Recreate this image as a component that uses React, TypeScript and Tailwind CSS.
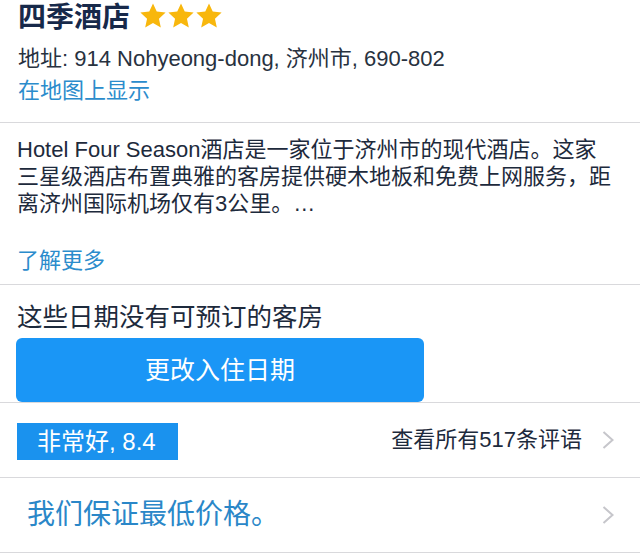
import React from "react";

const FONT = { fontFamily: '"Liberation Sans", "Noto Sans CJK SC", sans-serif' };

function Star() {
  return (
    <svg width="28" height="28" viewBox="0 0 24 24" className="block">
      <polygon
        points="12,1.2 15.2,8.2 22.8,9.1 17.1,14.3 18.7,21.8 12,18 5.3,21.8 6.9,14.3 1.2,9.1 8.8,8.2"
        fill="#f8b70d"
      />
    </svg>
  );
}

function Chevron() {
  return (
    <svg width="14" height="20" viewBox="0 0 14 20" className="block">
      <polyline points="2.5,2 11.5,10 2.5,18" fill="none" stroke="#c6c6cb" strokeWidth="2" />
    </svg>
  );
}

export default function App() {
  return (
    <div className="w-[640px] h-[557px] bg-white overflow-hidden text-[#1f2c3c]" style={FONT}>
      {/* Header */}
      <div className="h-[123px] border-b border-[#d9d9dc] pl-[18px] flex flex-col">
        <div className="h-[36px] flex items-center">
          <span className="text-[28px] leading-[36px] font-bold text-[#17294a]">四季酒店</span>
          <div className="flex ml-[9px] -mt-[4px]">
            <Star />
            <Star />
            <Star />
          </div>
        </div>
        <div className="mt-[11px] text-[22px] leading-[24px] text-[#28323f] whitespace-nowrap">
          地址: 914 Nohyeong-dong, 济州市, 690-802
        </div>
        <div className="mt-[8px] text-[22px] leading-[24px] text-[#2b8ccc]">在地图上显示</div>
      </div>

      {/* Description */}
      <div className="h-[162px] border-b border-[#d9d9dc] pl-[17px] pt-[13px] flex flex-col">
        <div className="text-[22px] leading-[27px] text-[#1d2a3c] whitespace-nowrap">
          <div>Hotel Four Season酒店是一家位于济州市的现代酒店。这家</div>
          <div>三星级酒店布置典雅的客房提供硬木地板和免费上网服务，距</div>
          <div>离济州国际机场仅有3公里。…</div>
        </div>
        <div className="mt-[32px] text-[22px] leading-[24px] text-[#2b8ccc]">了解更多</div>
      </div>

      {/* Availability */}
      <div className="h-[118px] border-b border-[#d9d9dc] pl-[16px] pt-[17px] flex flex-col">
        <div className="pl-[1px] text-[25.5px] leading-[30px] text-[#1d2a3c] whitespace-nowrap">
          这些日期没有可预订的客房
        </div>
        <button className="mt-[6px] w-[408px] h-[64px] rounded-[6px] bg-[#1a96f6] text-white text-[25px] leading-[30px] flex items-center justify-center">
          更改入住日期
        </button>
      </div>

      {/* Rating */}
      <div className="h-[75px] border-b border-[#d9d9dc] pl-[17px] pr-[25px] flex items-center justify-between">
        <div className="h-[37px] pl-[20px] pr-[22px] bg-[#1a92ee] text-white text-[24px] leading-[37px] flex items-center mt-[2px]">
          非常好, 8.4
        </div>
        <div className="flex items-center gap-[19px]">
          <span className="text-[22px] leading-[26px] text-[#1d2a3c]">查看所有517条评语</span>
          <Chevron />
        </div>
      </div>

      {/* Price guarantee */}
      <div className="h-[75px] border-b border-[#d9d9dc] pl-[27px] pr-[25px] flex items-center justify-between">
        <span className="text-[28px] leading-[32px] text-[#2a87c8]">我们保证最低价格。</span>
        <Chevron />
      </div>
    </div>
  );
}
